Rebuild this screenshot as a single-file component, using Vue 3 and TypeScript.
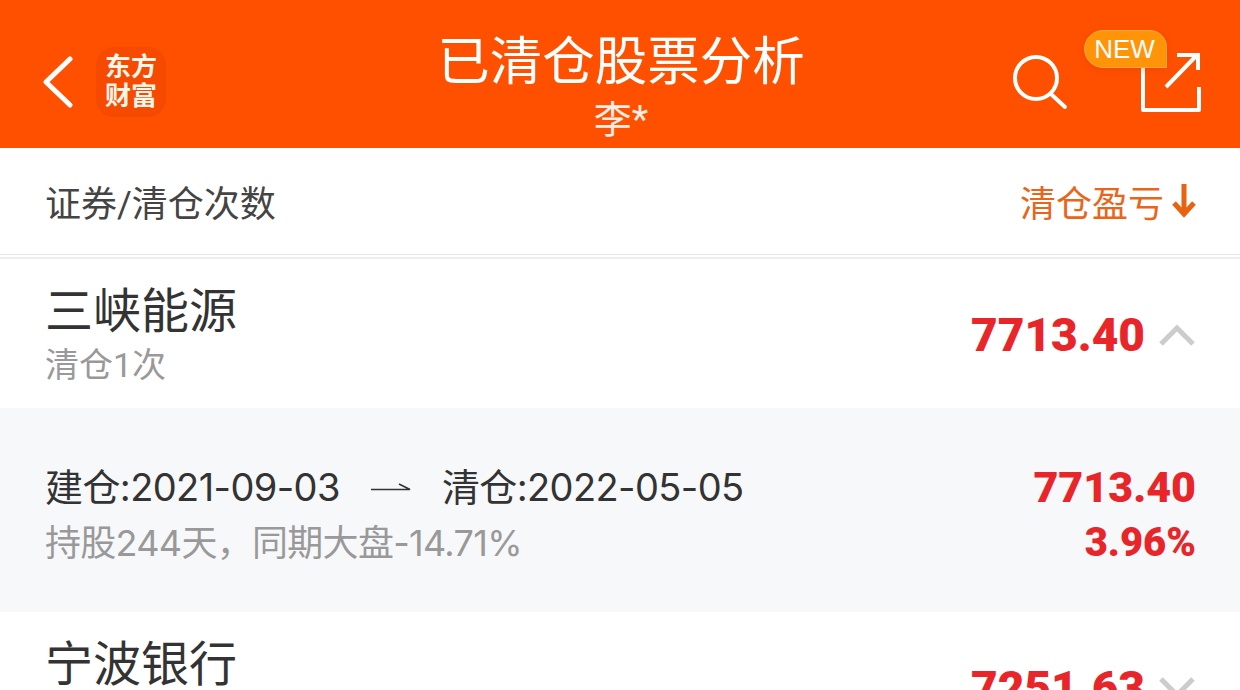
<script setup lang="ts">
interface Trade {
  open: string
  close: string
  summary: string
  profit: string
  rate: string
}

interface Stock {
  name: string
  times: string
  profit: string
  expanded: boolean
  trades: Trade[]
}

const stocks: Stock[] = [
  {
    name: '三峡能源',
    times: '清仓1次',
    profit: '7713.40',
    expanded: true,
    trades: [
      {
        open: '建仓:2021-09-03',
        close: '清仓:2022-05-05',
        summary: '持股244天，同期大盘-14.71%',
        profit: '7713.40',
        rate: '3.96%',
      },
    ],
  },
  { name: '宁波银行', times: '清仓1次', profit: '7251.63', expanded: false, trades: [] },
]
</script>

<template>
  <div class="page">
    <header class="top-bar">
      <div class="top-left">
        <svg class="back" width="32" height="52" viewBox="0 0 32 52">
          <path d="M28 3 L4 26 L28 49" fill="none" stroke="#fff" stroke-width="5" stroke-linecap="round" stroke-linejoin="round" />
        </svg>
        <div class="logo"><span>东方</span><span>财富</span></div>
      </div>
      <div class="title-box">
        <div class="title">已清仓股票分析</div>
        <div class="subtitle">李*</div>
      </div>
      <div class="top-right">
        <svg class="search" width="56" height="56" viewBox="0 0 56 56">
          <circle cx="24" cy="24" r="21" fill="none" stroke="#fff" stroke-width="4" />
          <path d="M40 41 L53 53" fill="none" stroke="#fff" stroke-width="4" stroke-linecap="round" />
        </svg>
        <div class="share">
          <svg width="62" height="62" viewBox="0 0 62 62">
            <path d="M3 17 V59 H59 V36" fill="none" stroke="#fff" stroke-width="4" stroke-linejoin="round" />
            <path d="M26 36 L57 4 M37 4 H58 V19" fill="none" stroke="#fff" stroke-width="4" />
          </svg>
          <span class="badge">NEW</span>
        </div>
      </div>
    </header>

    <div class="list-head">
      <span>证券/清仓次数</span>
      <span class="sort">
        清仓盈亏
        <svg width="24" height="36" viewBox="0 0 24 36">
          <path d="M12 1 V31 M2 20 L12 31 L22 20" fill="none" stroke="#e8620f" stroke-width="5" />
        </svg>
      </span>
    </div>
    <div class="divider"></div>

    <template v-for="stock in stocks" :key="stock.name">
      <div class="stock-row">
        <div>
          <div class="stock-name">{{ stock.name }}</div>
          <div class="stock-times">{{ stock.times }}</div>
        </div>
        <div class="stock-right">
          <span class="stock-profit">{{ stock.profit }}</span>
          <svg width="38" height="22" viewBox="0 0 38 22">
            <path v-if="stock.expanded" d="M3 20 L19 4 L35 20" fill="none" stroke="#ccc" stroke-width="5" />
            <path v-else d="M3 2 L19 18 L35 2" fill="none" stroke="#ccc" stroke-width="5" />
          </svg>
        </div>
      </div>
      <div v-for="trade in stock.trades" :key="trade.open" class="trade">
        <div>
          <div class="trade-dates">
            <span>{{ trade.open }}</span>
            <svg width="42" height="12" viewBox="0 0 42 12">
              <path d="M1 8.5 H40 L29 3" fill="none" stroke="#333" stroke-width="1.6" />
            </svg>
            <span>{{ trade.close }}</span>
          </div>
          <div class="trade-summary">{{ trade.summary }}</div>
        </div>
        <div class="trade-right">
          <div class="trade-profit">{{ trade.profit }}</div>
          <div class="trade-rate">{{ trade.rate }}</div>
        </div>
      </div>
    </template>
  </div>
</template>

<style>
html,
body {
  margin: 0;
  overflow: hidden;
  background: #fff;
}
</style>

<style scoped>
.page {
  width: 1240px;
  height: 690px;
  overflow: hidden;
  font-family: Roboto, 'Noto Sans CJK SC', sans-serif;
  color: #333;
}
.top-bar {
  height: 148px;
  background: #ff5000;
  display: flex;
  justify-content: space-between;
  align-items: center;
  padding: 0 38px 0 42px;
  position: relative;
}
.top-left {
  display: flex;
  align-items: center;
  gap: 22px;
  padding-top: 16px;
}
.logo {
  width: 70px;
  height: 70px;
  border-radius: 18px;
  background: #f54a00;
  color: #fff6ea;
  font-size: 26px;
  font-weight: 700;
  line-height: 29px;
  display: flex;
  flex-direction: column;
  align-items: center;
  justify-content: center;
}
.title-box {
  position: absolute;
  left: 2px;
  right: 0;
  top: 32px;
  text-align: center;
  color: #fff;
}
.title {
  font-size: 52.5px;
  line-height: 60px;
}
.subtitle {
  font-size: 38px;
  line-height: 56px;
  opacity: 0.9;
}
.top-right {
  display: flex;
  align-items: flex-end;
  gap: 72px;
  padding-top: 16px;
}
.search {
  margin-bottom: 3px;
}
.share {
  position: relative;
  height: 62px;
}
.badge {
  position: absolute;
  left: -56px;
  top: -21px;
  width: 83px;
  height: 38px;
  box-sizing: border-box;
  padding-right: 2px;
  background: #ff9408;
  border: 1px solid #ffa73a;
  border-radius: 19px 17px 0 19px;
  box-shadow: 0 2px 6px rgba(200, 60, 0, 0.25);
  color: #fff;
  font-family: 'Liberation Sans', sans-serif;
  font-size: 26px;
  line-height: 36px;
  text-align: center;
}
.list-head {
  height: 106px;
  border-bottom: 1px solid #e8e8e8;
  display: flex;
  justify-content: space-between;
  align-items: center;
  padding: 0 44px 0 45px;
  font-size: 36px;
  color: #444;
}
.sort {
  color: #e8651a;
  display: flex;
  align-items: center;
  gap: 8px;
}
.divider {
  height: 2px;
  margin-top: 2px;
  background: #eee;
}
.stock-row {
  height: 149px;
  box-sizing: border-box;
  display: flex;
  justify-content: space-between;
  align-items: center;
  padding: 3px 44px 0 45px;
}
.stock-name {
  font-size: 48px;
  line-height: 60px;
}
.stock-times {
  font-size: 34px;
  line-height: 46px;
  color: #999;
}
.stock-right {
  display: flex;
  align-items: center;
  gap: 13px;
  margin-top: 0;
}
.stock-profit {
  font-size: 46px;
  font-weight: 900;
  color: #e8262a;
}
.trade {
  height: 204px;
  background: #f7f8fa;
  display: flex;
  justify-content: space-between;
  align-items: center;
  padding: 10px 44px 0 45px;
  box-sizing: border-box;
  font-family: Inter, 'Noto Sans CJK SC', sans-serif;
}
.trade-dates {
  display: flex;
  align-items: center;
  gap: 30px;
  font-size: 38px;
  line-height: 56px;
  letter-spacing: -0.6px;
}
.trade-summary {
  font-size: 36px;
  line-height: 56px;
  letter-spacing: -0.7px;
  color: #999;
}
.trade-right {
  text-align: right;
  font-family: Roboto, sans-serif;
  font-weight: 900;
  color: #e8262a;
}
.trade-profit {
  font-size: 43px;
  line-height: 56px;
}
.trade-rate {
  font-size: 40px;
  line-height: 56px;
}
</style>
